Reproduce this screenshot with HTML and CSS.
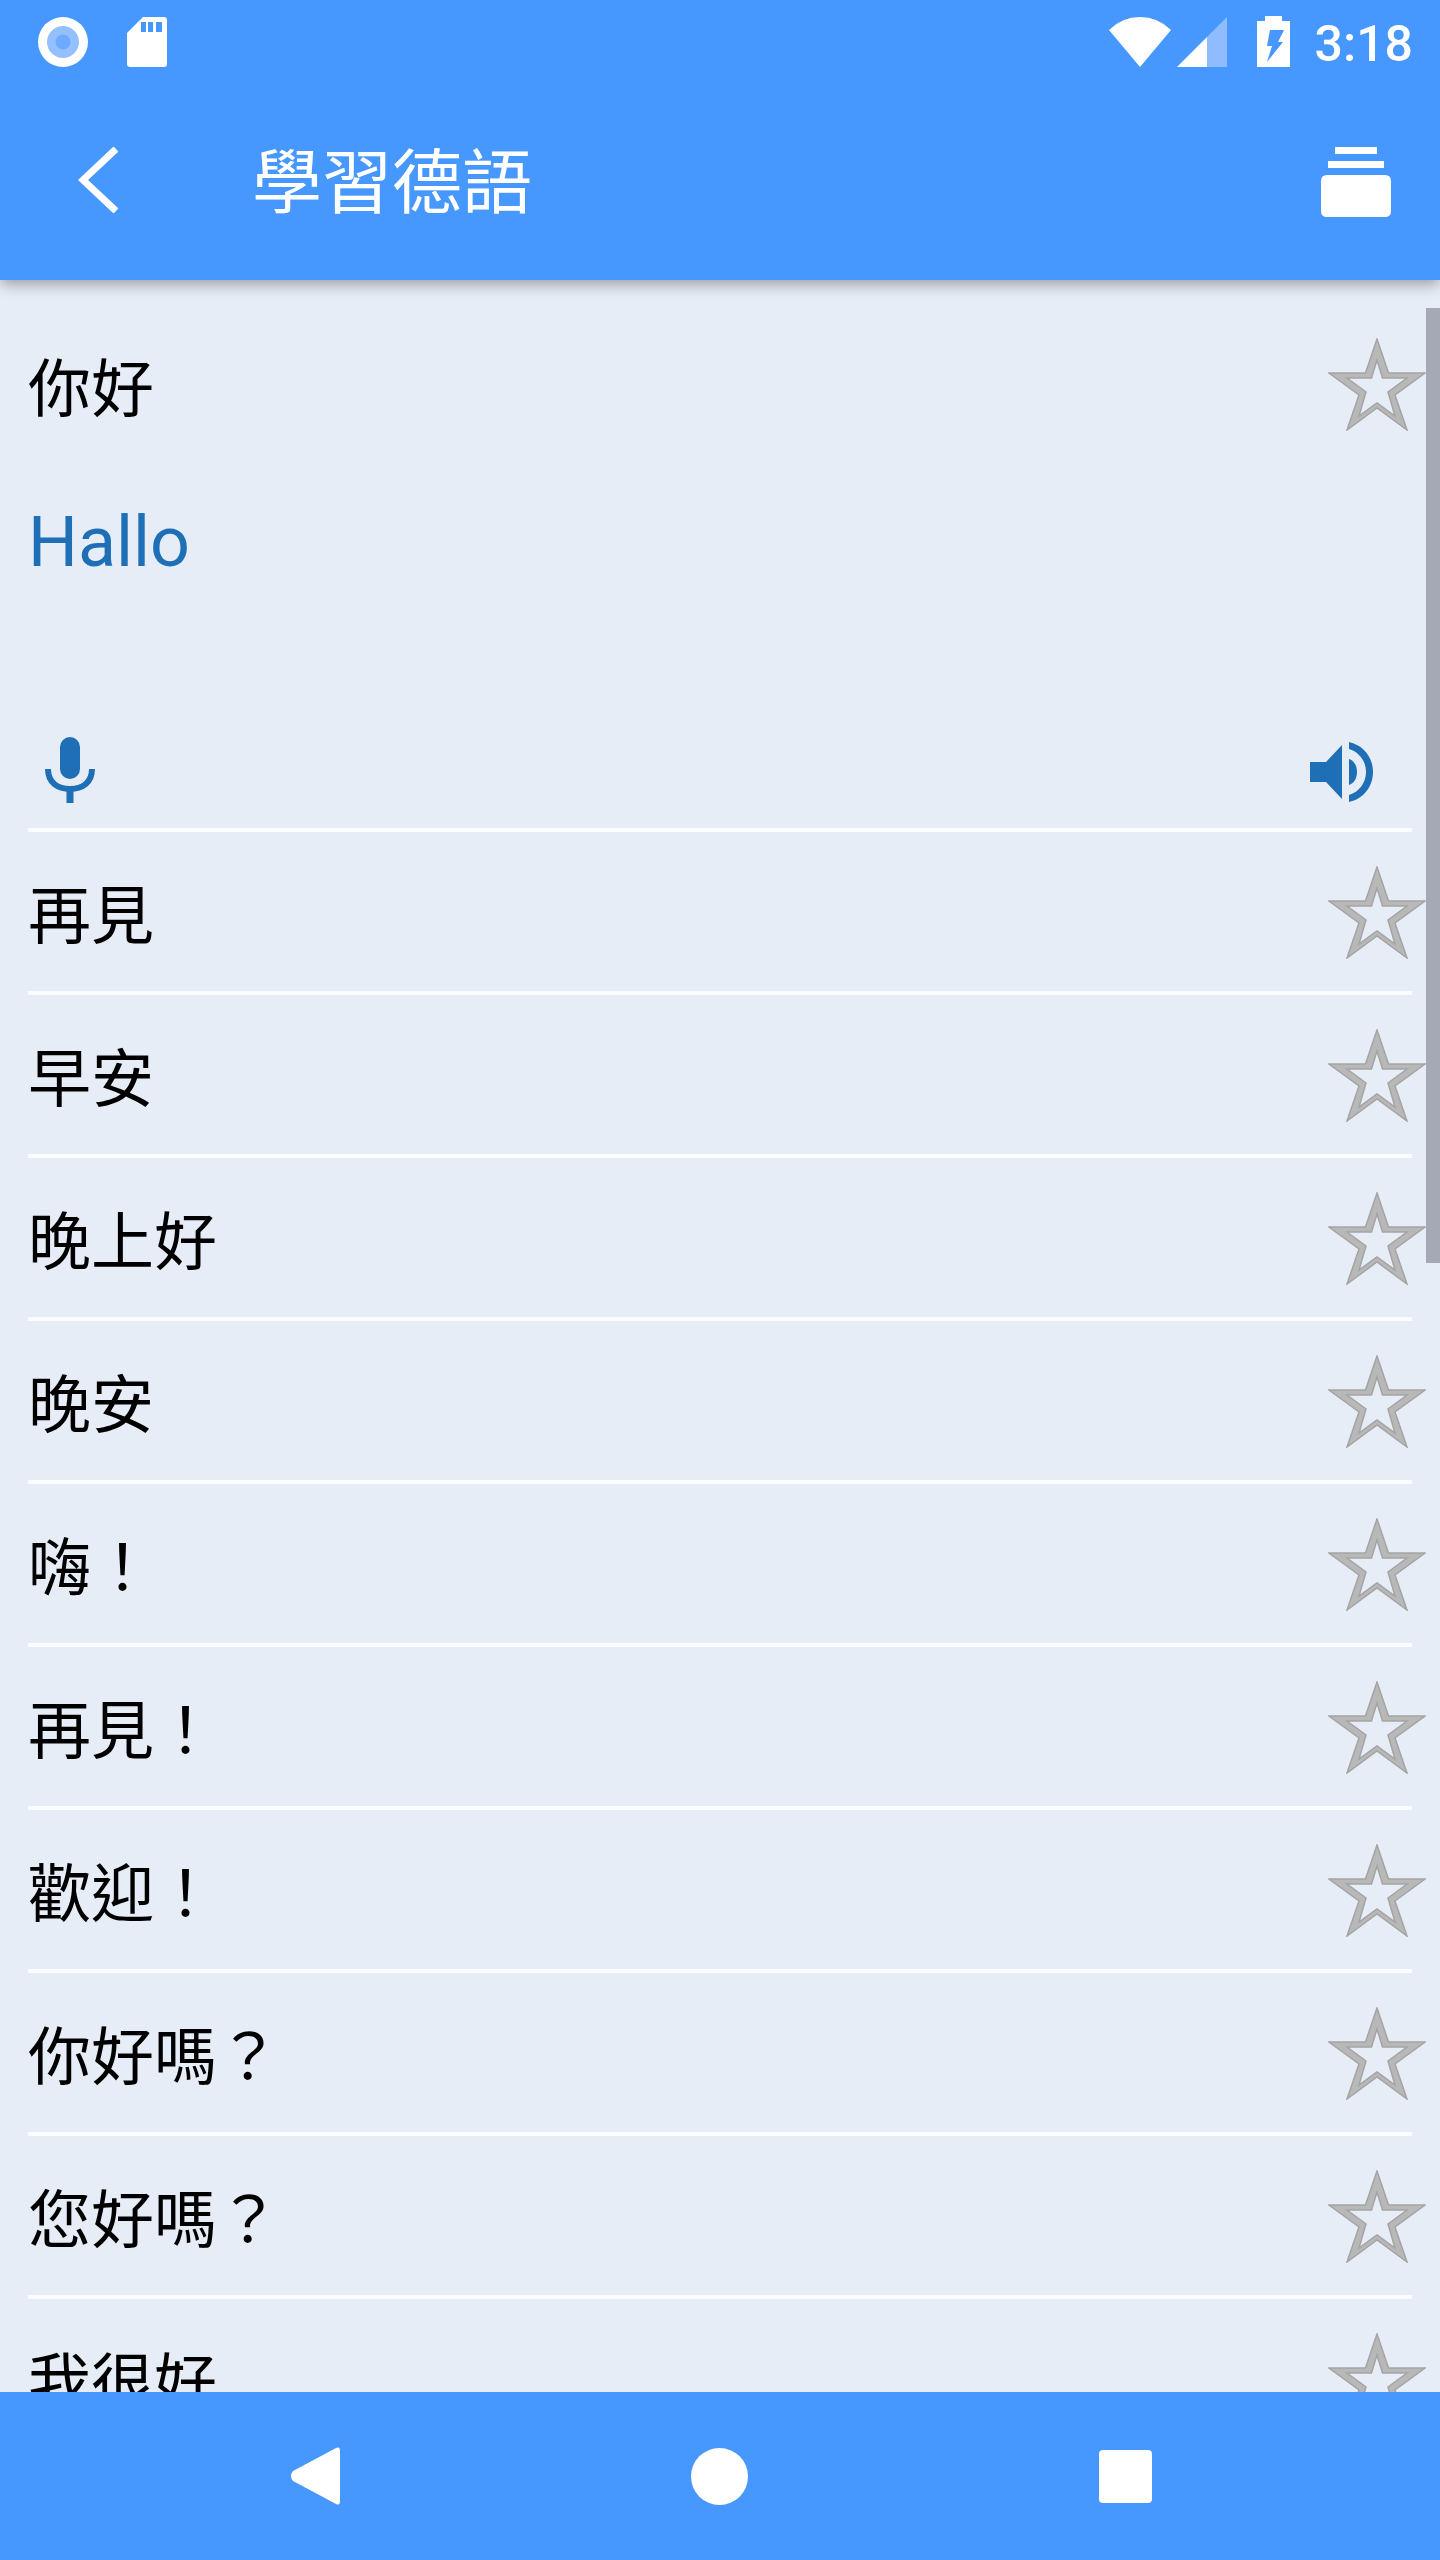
FILE: index.html
```html
<!DOCTYPE html>
<html lang="zh-Hant">
<head>
    <meta charset="UTF-8">
    <meta name="viewport" content="width=device-width, initial-scale=1.0">
    <title>學習德語</title>
    <link rel="stylesheet" href="styles.css">
</head>
<body>

    <svg class="defs" width="0" height="0">
        <symbol id="estrella" viewBox="0 0 98 93">
            <path fill-rule="evenodd" fill="#b8b8b8" stroke="#a4a4a4" stroke-width="1.5" d="M49 1 60.5 35H97L67 57 79 92 49 70 19 92 31 57 1 35H37.5ZM49 22 43.500 40H19L38 54 31 78 49 65 67 78 60 54 79 40H54.500Z"/>
        </symbol>
    </svg>

    <div class="pantalla">
        <header class="cabecera">
            <div class="estado">
                <div class="estado-izq">
                    <svg class="icono-disco" viewBox="0 0 50 50">
                        <circle cx="25" cy="25" r="25" fill="#fff"/>
                        <circle cx="25" cy="25" r="16" fill="#94c0ff"/>
                        <circle cx="25" cy="25" r="7.5" fill="#6eaaff"/>
                    </svg>
                    <svg class="icono-sd" viewBox="0 0 40 50">
                        <path fill="#fff" d="M16 0H37Q40 0 40 3V47Q40 50 37 50H3Q0 50 0 47V16Z"/>
                        <path fill="#4698fe" d="M14 5h5v10h-5zM21 5h5v10h-5zM29 5h6v10h-6z"/>
                    </svg>
                </div>
                <div class="estado-der">
                    <svg class="icono-wifi" viewBox="0 0 62 50">
                        <path fill="#fff" d="M0 13Q13 0 31 0T62 13L31 50Z"/>
                    </svg>
                    <svg class="icono-senal" viewBox="0 0 50 50">
                        <path fill="#8fbcff" d="M50 0V50H30V20Z"/>
                        <path fill="#fff" d="M30 20V50H0Z"/>
                    </svg>
                    <svg class="icono-bateria" viewBox="0 0 33 51">
                        <path fill="#fff" d="M8 0H25V5H33V51H0V5H8Z"/>
                        <path fill="#4698fe" d="M13 14H27L21 26H26L10 46 15 30H10Z"/>
                    </svg>
                    <span class="hora">3:18</span>
                </div>
            </div>
            <div class="barra">
                <svg class="icono-atras" viewBox="0 0 40 66">
                    <path fill="none" stroke="#fff" stroke-width="7" d="M38 2 5 33 38 64"/>
                </svg>
                <h1 class="titulo">學習德語</h1>
                <svg class="icono-archivo" viewBox="0 0 70 70">
                    <path fill="#fff" d="M14 0H56V7H14ZM7 14H63V21H7ZM6 28H64Q70 28 70 34V64Q70 70 64 70H6Q0 70 0 64V34Q0 28 6 28Z"/>
                </svg>
            </div>
        </header>

        <main class="lista">
            <div class="deslizador"></div>

            <section class="abierta">
                <div class="abierta-fila">
                    <span class="frase">你好</span>
                    <svg class="estrella"><use href="#estrella"/></svg>
                </div>
                <div class="traduccion">Hallo</div>
                <div class="controles">
                    <svg class="icono-micro" viewBox="0 0 50 66">
                        <rect x="15" y="0" width="20" height="42" rx="10" fill="#1e6fb6"/>
                        <path fill="none" stroke="#1e6fb6" stroke-width="6" d="M3 32C3 46 13 52 25 52S47 46 47 32"/>
                        <path fill="#1e6fb6" d="M21.500 52h7v14h-7z"/>
                    </svg>
                    <svg class="icono-altavoz" viewBox="0 0 63 60">
                        <path fill="#1e6fb6" d="M0 20H16L32 3V57L16 40H0Z"/>
                        <path fill="#1e6fb6" d="M39 17C45 19 47 25 47 30S45 41 39 43Z"/>
                        <path fill="#1e6fb6" d="M39 0C53 3 63 15 63 30S53 57 39 60V53C49 50 56 41 56 30S49 10 39 7Z"/>
                    </svg>
                </div>
            </section>

            <div class="fila"><span class="frase">再見</span><svg class="estrella"><use href="#estrella"/></svg></div>
            <div class="fila"><span class="frase">早安</span><svg class="estrella"><use href="#estrella"/></svg></div>
            <div class="fila"><span class="frase">晚上好</span><svg class="estrella"><use href="#estrella"/></svg></div>
            <div class="fila"><span class="frase">晚安</span><svg class="estrella"><use href="#estrella"/></svg></div>
            <div class="fila"><span class="frase">嗨！</span><svg class="estrella"><use href="#estrella"/></svg></div>
            <div class="fila"><span class="frase">再見！</span><svg class="estrella"><use href="#estrella"/></svg></div>
            <div class="fila"><span class="frase">歡迎！</span><svg class="estrella"><use href="#estrella"/></svg></div>
            <div class="fila"><span class="frase">你好嗎？</span><svg class="estrella"><use href="#estrella"/></svg></div>
            <div class="fila"><span class="frase">您好嗎？</span><svg class="estrella"><use href="#estrella"/></svg></div>
            <div class="fila"><span class="frase">我很好</span><svg class="estrella"><use href="#estrella"/></svg></div>
        </main>

        <nav class="navegacion">
            <svg class="nav-atras" viewBox="0 0 50 58">
                <path fill="#fff" d="M46 1Q50-1 50 4V54Q50 59 46 57L3 34Q-1 29 3 24Z"/>
            </svg>
            <span class="nav-inicio"></span>
            <span class="nav-recientes"></span>
        </nav>
    </div>

</body>
</html>
```

FILE: styles.css
```css
body {
    margin: 0;
    font-family: "Noto Sans CJK TC", "Roboto", sans-serif;
    background: #e7edf7;
}

.defs {
    display: block;
}

.pantalla {
    width: 1440px;
    height: 2560px;
    display: flex;
    flex-direction: column;
    overflow: hidden;
}

/* Cabecera azul */
.cabecera {
    height: 280px;
    flex: none;
    background: #4698fe;
    box-shadow: 0 4px 14px rgba(0, 0, 0, 0.35);
    position: relative;
    z-index: 2;
}

.estado {
    height: 84px;
    padding: 17px 27px 0 38px;
    box-sizing: border-box;
    display: flex;
    justify-content: space-between;
    align-items: flex-start;
}

.estado-izq {
    display: flex;
    gap: 39px;
}

.estado-der {
    display: flex;
    align-items: flex-start;
}

.icono-disco {
    width: 50px;
    height: 50px;
}

.icono-sd {
    width: 40px;
    height: 50px;
}

.icono-wifi {
    width: 62px;
    height: 50px;
    margin-right: 6px;
}

.icono-senal {
    width: 50px;
    height: 50px;
    margin-right: 30px;
}

.icono-bateria {
    width: 33px;
    height: 51px;
    margin-top: -1px;
    margin-right: 25px;
}

.hora {
    font-family: "Roboto", sans-serif;
    font-size: 50px;
    font-weight: 500;
    line-height: 50px;
    color: #fff;
    margin-top: 2px;
}

.barra {
    height: 196px;
    display: flex;
    align-items: center;
    padding: 0 49px 0 78px;
}

.icono-atras {
    width: 40px;
    height: 66px;
    margin-top: -5px;
}

.titulo {
    margin: -9px 0 0 134px;
    font-size: 70px;
    font-weight: 400;
    line-height: 80px;
    color: #fff;
    flex: 1;
}

.icono-archivo {
    width: 70px;
    height: 70px;
    margin-top: 0;
}

/* Lista de frases */
.lista {
    flex: 1;
    min-height: 0;
    overflow: hidden;
    position: relative;
    background: #e7edf7;
}

.deslizador {
    position: absolute;
    top: 28px;
    right: 0;
    width: 14px;
    height: 955px;
    background: #a4a9b5;
}

.abierta {
    margin: 0 28px;
    height: 552px;
    box-sizing: border-box;
    border-bottom: 4px solid #fbfcfe;
    display: flex;
    flex-direction: column;
}

.abierta-fila {
    height: 190px;
    flex: none;
    display: flex;
    justify-content: space-between;
    align-items: center;
    padding-top: 12px;
    box-sizing: border-box;
}

.abierta-fila .frase {
    margin-top: 5px;
}

.abierta-fila .estrella {
    margin-top: 6px;
}

.traduccion {
    font-family: "Roboto", sans-serif;
    font-size: 70px;
    line-height: 120px;
    color: #1e6fb6;
    margin-top: 12px;
}

.controles {
    margin-top: auto;
    display: flex;
    justify-content: space-between;
    align-items: flex-end;
    padding: 0 39px 25px 17px;
}

.icono-micro {
    width: 50px;
    height: 66px;
}

.icono-altavoz {
    width: 63px;
    height: 60px;
    margin-bottom: 1px;
}

.fila {
    margin: 0 28px;
    height: 163px;
    box-sizing: border-box;
    border-bottom: 4px solid #fbfcfe;
    display: flex;
    flex: none;
    justify-content: space-between;
    align-items: center;
}

.frase {
    font-size: 63px;
    line-height: 80px;
    color: #000;
    margin-top: -2px;
}

.estrella {
    width: 98px;
    height: 93px;
    flex: none;
    margin-right: -14px;
    margin-top: 2px;
}

/* Barra de navegacion */
.navegacion {
    height: 168px;
    flex: none;
    background: #4698fe;
    position: relative;
    z-index: 2;
    display: grid;
    grid-template-columns: 290px 50px 351px 57px 351px 53px;
    align-items: center;
    box-sizing: border-box;
}

.nav-atras {
    grid-column: 2;
    width: 50px;
    height: 58px;
}

.nav-inicio {
    grid-column: 4;
    width: 57px;
    height: 57px;
    border-radius: 50%;
    background: #fff;
}

.nav-recientes {
    grid-column: 6;
    width: 53px;
    height: 53px;
    border-radius: 4px;
    background: #fff;
}
```
